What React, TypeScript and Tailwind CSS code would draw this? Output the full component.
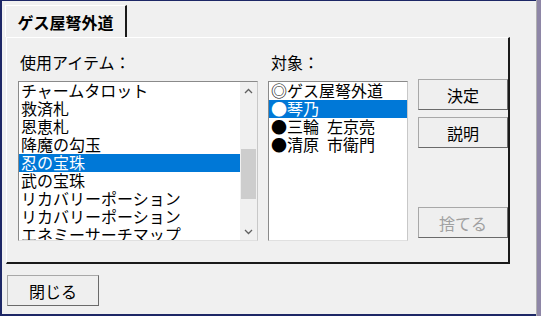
import React from 'react';

const font = { fontFamily: '"Noto Sans CJK JP", "Noto Sans", sans-serif' };

interface ListItem {
  label: string;
  selected?: boolean;
}

const items: ListItem[] = [
  { label: 'チャームタロット' },
  { label: '救済札' },
  { label: '恩恵札' },
  { label: '降魔の勾玉' },
  { label: '忍の宝珠', selected: true },
  { label: '武の宝珠' },
  { label: 'リカバリーポーション' },
  { label: 'リカバリーポーション' },
  { label: 'エネミーサーチマップ' },
];

const targets: ListItem[] = [
  { label: '◎ゲス屋弩外道' },
  { label: '●琴乃', selected: true },
  { label: '●三輪\u2002左京亮' },
  { label: '●清原\u2002市衛門' },
];

const Row: React.FC<{ item: ListItem }> = ({ item }) => (
  <div
    className={`h-[18px] leading-[17px] pl-[2px] whitespace-nowrap ${
      item.selected ? 'bg-[#0078d7] text-white' : 'text-black'
    }`}
  >
    {item.label}
  </div>
);

const Button: React.FC<{ label: string; disabled?: boolean; className?: string }> = ({
  label,
  disabled,
  className,
}) => (
  <button
    disabled={disabled}
    className={`h-[31px] bg-[#efefef] border border-[#a8a8a8] border-r-[#6a6a6a] border-b-[#6a6a6a] text-[16px] leading-none ${
      disabled ? 'text-[#a0a0a0]' : 'text-black'
    } ${className ?? ''}`}
  >
    {label}
  </button>
);

// スクロールバーの矢印
const Chevron: React.FC<{ up?: boolean }> = ({ up }) => (
  <svg width="9" height="6" viewBox="0 0 9 6" className="block">
    <path
      d={up ? 'M1 5 L4.5 1.5 L8 5' : 'M1 1 L4.5 4.5 L8 1'}
      fill="none"
      stroke="#606060"
      strokeWidth="1.3"
    />
  </svg>
);

export default function App() {
  return (
    <div className="w-[541px] h-[316px] flex bg-[#f0f0f0] overflow-hidden" style={font}>
      <div className="w-[536px] h-full flex flex-col border-l-2 border-t border-b-2 border-[#1d2766]">
        {/* タブ */}
        <div className="flex mt-[4px] ml-[3px] h-[32px]">
          <div className="w-[122px] border-t border-l border-white border-r-2 border-r-[#1a1a1a] flex items-center justify-center font-bold text-[16px] text-black">
            ゲス屋弩外道
          </div>
        </div>
        {/* タブパネル */}
        <div className="ml-[4px] w-[504px] h-[227px] border-t border-l border-white border-r-2 border-b-2 border-r-[#1a1a1a] border-b-[#1a1a1a] flex text-[16px] text-black">
          <div className="flex flex-col pl-[11px] pt-[15px]">
            <div className="h-[18px] leading-[18px] pl-[2px]">使用アイテム：</div>
            <div className="mt-[10px] w-[240px] h-[160px] border border-[#8a8a8a] border-r-[#c8c8c8] border-b-[#e0e0e0] bg-white flex">
              <div className="flex-1 overflow-hidden">
                {items.map((it, i) => (
                  <Row key={i} item={it} />
                ))}
              </div>
              <div className="w-[17px] bg-[#f0f0f0] flex flex-col items-center">
                <div className="h-[17px] flex items-center justify-center">
                  <Chevron up />
                </div>
                <div className="flex-1 w-full px-[1px] pt-[50px] pb-[24px]">
                  <div className="w-full h-full bg-[#cdcdcd]" />
                </div>
                <div className="h-[17px] flex items-center justify-center">
                  <Chevron />
                </div>
              </div>
            </div>
          </div>
          <div className="flex flex-col pl-[10px] pt-[15px]">
            <div className="h-[18px] leading-[18px] pl-[3px]">対象：</div>
            <div className="mt-[10px] w-[140px] h-[160px] border border-[#8a8a8a] border-r-[#c8c8c8] border-b-[#e0e0e0] bg-white overflow-hidden">
              {targets.map((it, i) => (
                <Row key={i} item={it} />
              ))}
            </div>
          </div>
          <div className="flex flex-col pl-[10px] pt-[41px]">
            <Button label="決定" className="w-[90px]" />
            <Button label="説明" className="w-[90px] mt-[7px]" />
            <Button label="捨てる" disabled className="w-[90px] mt-[59px]" />
          </div>
        </div>
        {/* 下部 */}
        <div className="pl-[5px] pt-[11px]">
          <Button label="閉じる" className="w-[92px]" />
        </div>
      </div>
      <div className="flex-1 h-full bg-[#8e86a6] border-l border-[#b0b0b0]" />
    </div>
  );
}
